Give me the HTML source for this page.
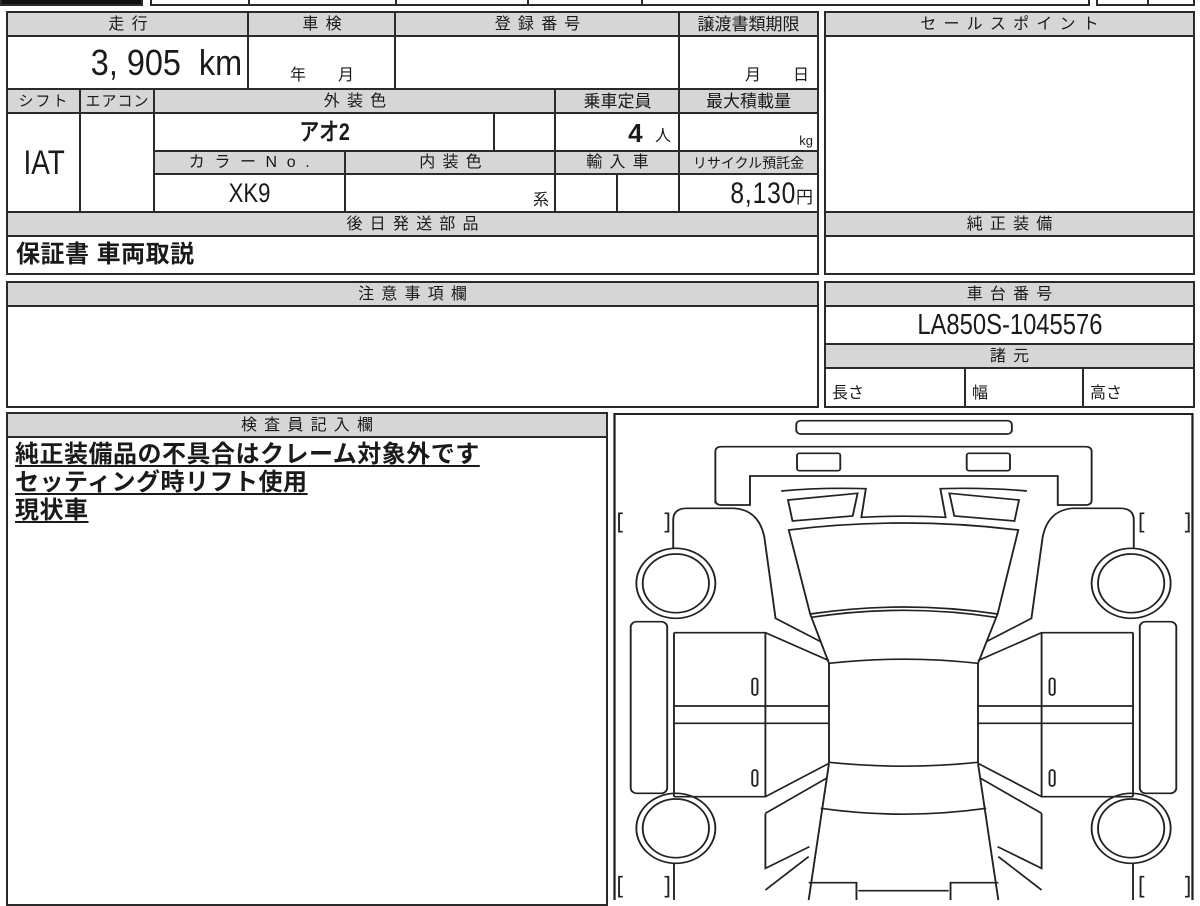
<!DOCTYPE html>
<html><head><meta charset="utf-8"><style>
body{margin:0;width:1200px;height:900px;overflow:hidden;background:#fff;position:relative;font-family:"Liberation Sans","Noto Sans CJK JP",sans-serif;color:#1a1a1a}
.c{position:absolute;box-sizing:border-box;border:2px solid #2a2a2a;background:#fff;display:flex;align-items:center;justify-content:center;font-size:16px;line-height:1;white-space:nowrap;overflow:hidden}
.g{background:#d6d6d6}
.sp{letter-spacing:.45em;padding-left:.45em}
.n{display:inline-block;transform:scaleX(.82);font-family:"Liberation Sans",sans-serif}
.u{text-decoration:underline;text-underline-offset:3px;font-weight:bold;font-size:24px;line-height:28px;letter-spacing:.5px}
</style></head><body>
<div class="c" style="left:0;top:-4px;width:143px;height:10px;background:#111"></div>
<div class="c" style="left:150px;top:-4px;width:100px;height:10px"></div>
<div class="c" style="left:248px;top:-4px;width:149px;height:10px"></div>
<div class="c" style="left:395px;top:-4px;width:134px;height:10px"></div>
<div class="c" style="left:527px;top:-4px;width:116px;height:10px"></div>
<div class="c" style="left:641px;top:-4px;width:449px;height:10px"></div>
<div class="c" style="left:1096px;top:-4px;width:53px;height:10px"></div>
<div class="c" style="left:1147px;top:-4px;width:48px;height:10px"></div>

<div class="c g sp" style="left:6px;top:11px;width:244px;height:27px">走行</div>
<div class="c g sp" style="left:247px;top:11px;width:150px;height:27px">車検</div>
<div class="c g sp" style="left:394px;top:11px;width:287px;height:27px">登録番号</div>
<div class="c g" style="left:678px;top:11px;width:141px;height:27px;font-size:17px">譲渡書類期限</div>

<div class="c" style="left:6px;top:35px;width:244px;height:56px;justify-content:flex-end;padding-right:6px"><span class="n" style="font-size:36px;transform-origin:right;transform:scaleX(.9)">3,&nbsp;905&nbsp;&nbsp;km</span></div>
<div class="c" style="left:247px;top:35px;width:150px;height:56px;align-items:flex-end;padding-bottom:5px;font-size:16px">年&emsp;&emsp;月</div>
<div class="c" style="left:394px;top:35px;width:287px;height:56px"></div>
<div class="c" style="left:678px;top:35px;width:141px;height:56px;align-items:flex-end;justify-content:flex-end;padding:0 8px 5px 0">月&emsp;&emsp;日</div>

<div class="c g" style="left:6px;top:88px;width:76px;height:27px;font-size:15px;letter-spacing:2px">シフト</div>
<div class="c g" style="left:79px;top:88px;width:77px;height:27px;font-size:15px;letter-spacing:1px">エアコン</div>
<div class="c g sp" style="left:153px;top:88px;width:404px;height:27px">外装色</div>
<div class="c g" style="left:554px;top:88px;width:127px;height:27px;font-size:17px">乗車定員</div>
<div class="c g" style="left:678px;top:88px;width:141px;height:27px;font-size:17px">最大積載量</div>

<div class="c" style="left:6px;top:112px;width:76px;height:102px"><span class="n" style="font-size:34px">IAT</span></div>
<div class="c" style="left:79px;top:112px;width:77px;height:102px"></div>
<div class="c" style="left:153px;top:112px;width:343px;height:41px;font-size:24px;font-weight:bold"><span class="n">アオ2</span></div>
<div class="c" style="left:493px;top:112px;width:64px;height:41px"></div>
<div class="c" style="left:554px;top:112px;width:127px;height:41px;justify-content:flex-end;padding-right:8px"><b style="font-size:26px">4</b>&ensp;&nbsp;<span style="font-size:16px;margin-top:8px">人</span></div>
<div class="c" style="left:678px;top:112px;width:141px;height:41px;justify-content:flex-end;align-items:flex-end;padding:0 4px 4px 0;font-size:13px">kg</div>

<div class="c g" style="left:153px;top:150px;width:194px;height:26px;letter-spacing:.6em;padding-left:.5em">カラーNo.</div>
<div class="c g sp" style="left:344px;top:150px;width:213px;height:26px">内装色</div>
<div class="c g sp" style="left:554px;top:150px;width:127px;height:26px">輸入車</div>
<div class="c g" style="left:678px;top:150px;width:141px;height:26px;font-size:14px">リサイクル預託金</div>

<div class="c" style="left:153px;top:173px;width:194px;height:41px"><span class="n" style="font-size:27px">XK9</span></div>
<div class="c" style="left:344px;top:173px;width:213px;height:41px;justify-content:flex-end;align-items:flex-end;padding:0 6px 3px 0;font-size:16px">系</div>
<div class="c" style="left:554px;top:173px;width:65px;height:41px"></div>
<div class="c" style="left:616px;top:173px;width:65px;height:41px"></div>
<div class="c" style="left:678px;top:173px;width:141px;height:41px;justify-content:flex-end;padding-right:4px"><span class="n" style="font-size:30px;transform-origin:right;letter-spacing:1px">8,130</span><span style="font-size:17px;margin-top:8px">円</span></div>

<div class="c g sp" style="left:6px;top:211px;width:813px;height:27px">後日発送部品</div>
<div class="c" style="left:6px;top:235px;width:813px;height:40px;justify-content:flex-start;padding-left:8px;font-size:24px;font-weight:bold;letter-spacing:.5px">保証書&nbsp;車両取説</div>

<div class="c g sp" style="left:824px;top:11px;width:371px;height:27px">セールスポイント</div>
<div class="c" style="left:824px;top:35px;width:371px;height:179px"></div>
<div class="c g sp" style="left:824px;top:211px;width:371px;height:27px">純正装備</div>
<div class="c" style="left:824px;top:235px;width:371px;height:40px"></div>

<div class="c g sp" style="left:6px;top:281px;width:813px;height:27px">注意事項欄</div>
<div class="c" style="left:6px;top:305px;width:813px;height:103px"></div>

<div class="c g sp" style="left:824px;top:281px;width:371px;height:27px">車台番号</div>
<div class="c" style="left:824px;top:305px;width:371px;height:41px"><span class="n" style="font-size:29px">LA850S-1045576</span></div>
<div class="c g sp" style="left:824px;top:343px;width:371px;height:27px">諸元</div>
<div class="c" style="left:824px;top:367px;width:143px;height:41px;justify-content:flex-start;padding-left:6px;align-items:flex-end;padding-bottom:4px">長さ</div>
<div class="c" style="left:964px;top:367px;width:121px;height:41px;justify-content:flex-start;padding-left:6px;align-items:flex-end;padding-bottom:4px">幅</div>
<div class="c" style="left:1082px;top:367px;width:113px;height:41px;justify-content:flex-start;padding-left:6px;align-items:flex-end;padding-bottom:4px">高さ</div>

<div class="c g sp" style="left:6px;top:412px;width:602px;height:27px">検査員記入欄</div>
<div class="c" style="left:6px;top:436px;width:602px;height:470px;display:block;padding:3px 0 0 7px">
<div class="u">純正装備品の不具合はクレーム対象外です</div>
<div class="u">セッティング時リフト使用</div>
<div class="u">現状車</div>
</div>

<svg style="position:absolute;left:610px;top:410px" width="590" height="490" viewBox="0 0 1568 1470" preserveAspectRatio="none">
<g fill="none" stroke="#222" stroke-width="5">
<rect x="12" y="12" width="1536" height="1480" stroke-width="6"/>
<rect x="495" y="32" width="573" height="40" rx="12"/>
<path d="M280 280 L280 125 Q280 110 296 110 L1264 110 Q1280 110 1280 125 L1280 270 Q1280 285 1264 285 L1190 285 L1190 198 L372 198 L372 285 L296 285 Q280 285 280 270"/>
<rect x="497" y="130" width="115" height="52" rx="6"/>
<rect x="948" y="130" width="115" height="52" rx="6"/>
<path d="M455 243 Q560 232 680 236 L668 322 Q780 315 892 322 L878 236 Q1000 232 1108 243"/>
<path d="M473 270 L658 250 L645 318 L485 333 Z"/>
<path d="M1087 270 L902 250 L915 318 L1075 333 Z"/>
<path d="M475 360 Q780 318 1085 360 L1030 612 Q780 570 532 612 Z"/>
<path d="M535 622 Q780 580 1025 622"/>
<path d="M532 612 L582 760 M1030 612 L978 760"/>
<path d="M582 760 Q780 735 978 760 L978 1057 Q780 1080 582 1057 Z"/>
<path d="M168 415 L168 330 Q168 295 205 295 L330 295 Q395 300 410 380 L440 625 L560 695"/>
<path d="M1392 415 L1392 330 Q1392 295 1355 295 L1230 295 Q1165 300 1150 380 L1120 625 L1000 695"/>
<circle cx="175" cy="520" r="105"/><circle cx="175" cy="520" r="88"/>
<circle cx="1385" cy="520" r="105"/><circle cx="1385" cy="520" r="88"/>
<circle cx="175" cy="1255" r="105"/><circle cx="175" cy="1255" r="88"/>
<circle cx="1385" cy="1255" r="105"/><circle cx="1385" cy="1255" r="88"/>
<rect x="55" y="635" width="97" height="515" rx="16"/>
<rect x="1408" y="635" width="97" height="515" rx="16"/>
<path d="M170 668 L413 668 L582 752 M170 1160 L413 1160 L582 1060 M170 888 L582 888 M170 940 L582 940 M413 668 L413 1160 M170 668 L170 1160"/>
<path d="M1390 668 L1147 668 L978 752 M1390 1160 L1147 1160 L978 1060 M1390 888 L978 888 M1390 940 L978 940 M1147 668 L1147 1160 M1390 668 L1390 1160"/>
<rect x="378" y="805" width="14" height="50" rx="7"/><rect x="378" y="1080" width="14" height="48" rx="7"/>
<rect x="1168" y="805" width="14" height="50" rx="7"/><rect x="1168" y="1080" width="14" height="48" rx="7"/>
<path d="M582 1060 L528 1470 M978 1060 L1032 1470"/>
<path d="M560 1195 Q780 1230 1000 1195"/>
<path d="M413 1210 L575 1105 M413 1210 L413 1375 L530 1310 M1147 1210 L985 1105 M1147 1210 L1147 1375 L1030 1310"/>
<path d="M170 1360 L170 1470 M1390 1360 L1390 1470 M413 1440 L528 1340 M1147 1440 L1032 1340"/>
<path d="M528 1418 L655 1418 L655 1470 M905 1470 L905 1418 L1032 1418 M660 1442 L900 1442"/>
<path d="M34 310 L24 310 L24 365 L34 365 M145 310 L155 310 L155 365 L145 365"/>
<path d="M1420 310 L1410 310 L1410 365 L1420 365 M1528 310 L1538 310 L1538 365 L1528 365"/>
<path d="M34 1400 L24 1400 L24 1460 L34 1460 M145 1400 L155 1400 L155 1460 L145 1460"/>
<path d="M1420 1400 L1410 1400 L1410 1460 L1420 1460 M1528 1400 L1538 1400 L1538 1460 L1528 1460"/>
</g>
</svg>
</body></html>
